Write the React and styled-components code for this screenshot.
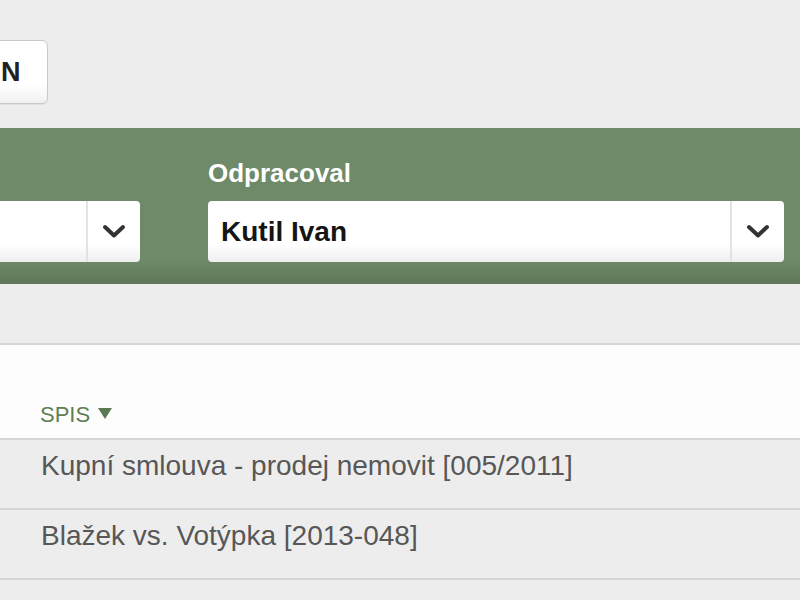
import React from "react";
import styled, { createGlobalStyle } from "styled-components";

const Global = createGlobalStyle`
  html, body { margin: 0; padding: 0; background: #ededed; overflow: hidden; }
  body { font-family: "Liberation Sans", Arial, sans-serif; }
  #root { width: 800px; height: 600px; overflow: hidden; }
`;

const Page = styled.div`
  width: 800px;
  height: 600px;
  overflow: hidden;
  display: flex;
  flex-direction: column;
`;

const TopBar = styled.div`
  display: flex;
  padding-top: 40px;
`;

const ActionButton = styled.button`
  height: 64px;
  margin-left: -40px;
  padding: 0 26px 0 40px;
  border: 1px solid #c9c9c9;
  border-radius: 6px;
  background: linear-gradient(to bottom, #ffffff 0%, #ffffff 70%, #f1f1f1 100%);
  box-shadow: 0 1px 1px rgba(0, 0, 0, 0.06);
  font-family: "Liberation Sans", Arial, sans-serif;
  font-weight: 700;
  font-size: 27px;
  color: #222;
`;

const FilterBar = styled.div`
  margin-top: 24px;
  display: flex;
  gap: 68px;
  padding: 30px 16px 22px 0;
  background: linear-gradient(
    to bottom,
    #6e8a68 0px,
    #6e8a68 132px,
    #5e7657 100%
  );
`;

const Field = styled.div`
  display: flex;
  flex-direction: column;
  gap: 13px;
  ${(p) => (p.$offset ? `margin-left: -${p.$offset}px; width: ${p.$width}px; flex: none;` : "flex: 1;")}
`;

const Label = styled.label`
  height: 30px;
  line-height: 30px;
  font-size: 26px;
  font-weight: 700;
  color: #ffffff;
  white-space: nowrap;
`;

const Select = styled.div`
  height: 61px;
  display: flex;
  border-radius: 4px;
  background: linear-gradient(to bottom, #ffffff 0%, #ffffff 72%, #eeeeee 100%);
`;

const Value = styled.div`
  flex: 1;
  display: flex;
  align-items: center;
  padding-left: 13px;
  font-size: 28px;
  font-weight: 700;
  color: #151515;
`;

const Toggle = styled.div`
  width: 52px;
  display: flex;
  align-items: center;
  justify-content: center;
  border-left: 2px solid #e3e3e3;
`;

const Chevron = () => (
  <svg width="24" height="15" viewBox="0 0 24 15">
    <polyline
      points="3,3 12,11.5 21,3"
      fill="none"
      stroke="#333"
      strokeWidth="4"
      strokeLinecap="round"
      strokeLinejoin="round"
    />
  </svg>
);

const Table = styled.div`
  margin-top: 59px;
  border-top: 2px solid #d5d5d5;
  display: flex;
  flex-direction: column;
`;

const HeaderRow = styled.div`
  height: 95px;
  box-sizing: border-box;
  background: #fdfdfd;
  border-bottom: 2px solid #d5d5d5;
  display: flex;
  align-items: flex-end;
  padding: 0 0 11px 40px;
`;

const HeaderCell = styled.div`
  display: flex;
  align-items: center;
  gap: 8px;
  line-height: 25px;
  font-size: 22px;
  color: #5f8055;
`;

const SortArrow = styled.span`
  width: 0;
  height: 0;
  border-left: 7px solid transparent;
  border-right: 7px solid transparent;
  border-top: 11px solid #5b7a50;
  margin-top: -2px;
`;

const Row = styled.div`
  height: 70px;
  box-sizing: border-box;
  border-bottom: 2px solid #d5d5d5;
  padding: 10px 0 0 41px;
  line-height: 32px;
  font-size: 28px;
  color: #575757;
  white-space: nowrap;
`;

const rows = [
  "Kupní smlouva - prodej nemovit [005/2011]",
  "Blažek vs. Votýpka [2013-048]",
  "",
];

export default function App() {
  return (
    <Page>
      <Global />
      <TopBar>
        <ActionButton>N</ActionButton>
      </TopBar>
      <FilterBar>
        <Field $offset={160} $width={300}>
          <Label>&nbsp;</Label>
          <Select>
            <Value />
            <Toggle>
              <Chevron />
            </Toggle>
          </Select>
        </Field>
        <Field>
          <Label>Odpracoval</Label>
          <Select>
            <Value>Kutil Ivan</Value>
            <Toggle>
              <Chevron />
            </Toggle>
          </Select>
        </Field>
      </FilterBar>
      <Table>
        <HeaderRow>
          <HeaderCell>
            SPIS <SortArrow />
          </HeaderCell>
        </HeaderRow>
        {rows.map((r, i) => (
          <Row key={i}>{r}</Row>
        ))}
      </Table>
    </Page>
  );
}
